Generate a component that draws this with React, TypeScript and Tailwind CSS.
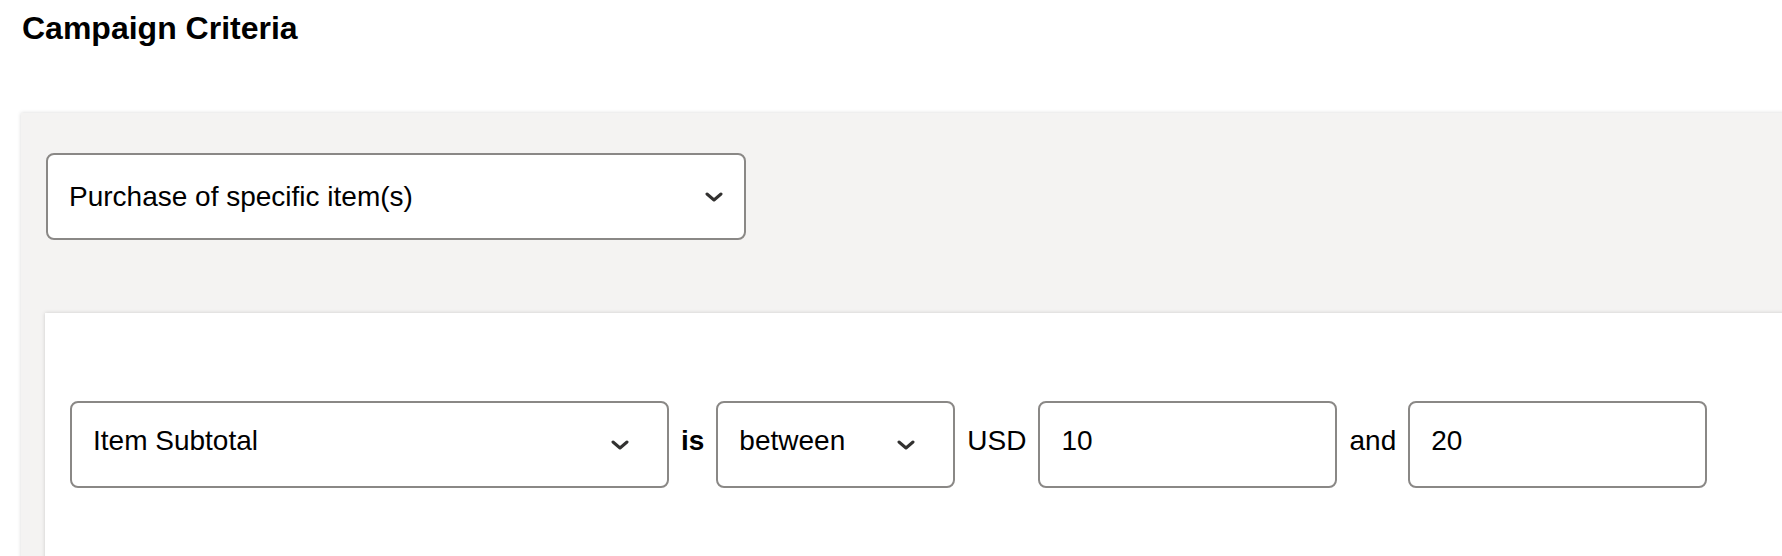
import { ReactNode } from "react";

const Chevron = () => (
  <svg width="18" height="10" viewBox="0 0 18 10" fill="none">
    <path
      d="M2 2 L9 8 L16 2"
      stroke="#323130"
      strokeWidth="3"
      strokeLinecap="round"
      strokeLinejoin="round"
    />
  </svg>
);

const SelectBox = ({
  label,
  width,
  chevronGap,
  lift,
}: {
  label: string;
  width: string;
  chevronGap: string;
  lift?: boolean;
}) => (
  <div
    className={`flex items-center justify-between h-[87px] ${width} ${chevronGap} pl-[21px] bg-white border-2 border-[#8a8886] rounded-[8px]`}
  >
    <span className={lift ? "pb-2" : ""}>{label}</span>
    <Chevron />
  </div>
);

const TextBox = ({ value }: { value: string }) => (
  <div className="flex items-center h-[87px] w-[299px] pl-[21px] bg-white border-2 border-[#8a8886] rounded-[8px]">
    <span className="pb-2">{value}</span>
  </div>
);

const Label = ({ children, bold }: { children: ReactNode; bold?: boolean }) => (
  <span className={`pb-2 ${bold ? "font-bold" : ""}`}>{children}</span>
);

export default function App() {
  return (
    <div
      className="h-[556px] w-full overflow-hidden bg-white text-black text-[28px]"
      style={{ fontFamily: '"Liberation Sans", Arial, sans-serif' }}
    >
      <h1 className="pt-[8px] pl-[22px] text-[32px] leading-[40px] font-bold">
        Campaign Criteria
      </h1>

      <div className="mt-[65px] ml-[21px] mr-[-40px] pl-[24px] pt-[40px] bg-[#f4f3f2] shadow-[0_0_4px_rgba(0,0,0,0.16)]">
        <div className="ml-px">
          <SelectBox
            label="Purchase of specific item(s)"
            width="w-[700px]"
            chevronGap="pr-[21px]"
          />
        </div>

        <div className="mt-[73px] h-[300px] pl-[25px] pt-[88px] bg-white shadow-[0_0_4px_rgba(0,0,0,0.16)]">
          <div className="flex items-center gap-[12px]">
            <SelectBox
              label="Item Subtotal"
              width="w-[599px]"
              chevronGap="pr-[38px]"
              lift
            />
            <Label bold>is</Label>
            <SelectBox
              label="between"
              width="w-[239px]"
              chevronGap="pr-[38px]"
              lift
            />
            <Label>USD</Label>
            <TextBox value="10" />
            <Label>and</Label>
            <TextBox value="20" />
          </div>
        </div>
      </div>
    </div>
  );
}
